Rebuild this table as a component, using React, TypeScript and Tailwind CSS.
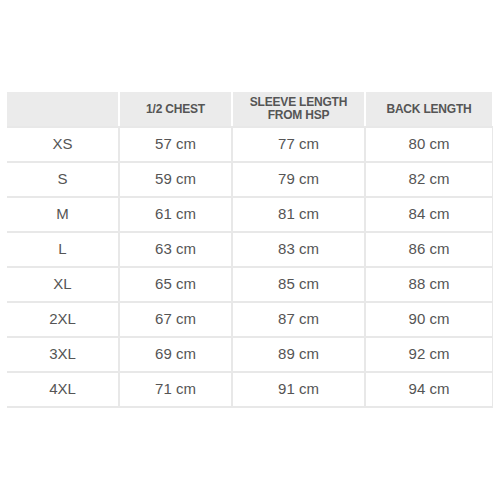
import React from "react";

const rows = [
  ["XS", "57 cm", "77 cm", "80 cm"],
  ["S", "59 cm", "79 cm", "82 cm"],
  ["M", "61 cm", "81 cm", "84 cm"],
  ["L", "63 cm", "83 cm", "86 cm"],
  ["XL", "65 cm", "85 cm", "88 cm"],
  ["2XL", "67 cm", "87 cm", "90 cm"],
  ["3XL", "69 cm", "89 cm", "92 cm"],
  ["4XL", "71 cm", "91 cm", "94 cm"],
];

const cols = "grid grid-cols-[111px_111px_131px_126px] gap-x-[2px]";

export default function App() {
  return (
    <div className="w-[500px] h-[500px] bg-white pt-[92px] px-[7px] font-['Liberation_Sans',Arial,sans-serif] text-[#555]">
      <div className={`${cols} h-[34px] text-[12px] font-bold leading-[13px] uppercase tracking-[-0.2px]`}>
        <div className="bg-[#ebebeb]" />
        <div className="bg-[#ebebeb] flex items-center justify-center text-center">1/2 Chest</div>
        <div className="bg-[#ebebeb] flex items-center justify-center text-center">
          Sleeve Length
          <br />
          From HSP
        </div>
        <div className="bg-[#ebebeb] flex items-center justify-center text-center">Back Length</div>
      </div>
      <div className="border-b-2 border-[#e8e8e8]">
        {rows.map((r) => (
          <div key={r[0]} className={`${cols} bg-[#e8e8e8] border-t-2 border-[#e8e8e8] h-[35px] text-[15px]`}>
            {r.map((c, i) => (
              <div key={i} className="bg-white flex items-center justify-center">
                {c}
              </div>
            ))}
          </div>
        ))}
      </div>
    </div>
  );
}
